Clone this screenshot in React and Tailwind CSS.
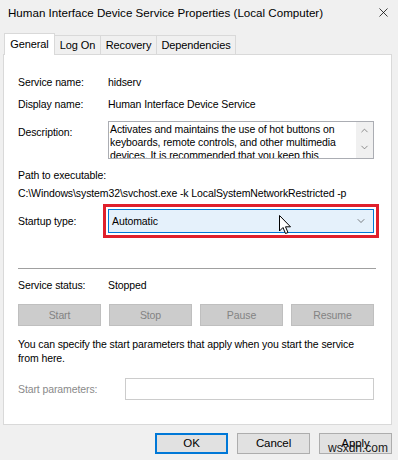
import { X, ChevronUp, ChevronDown } from 'lucide-react'

const font = { fontFamily: '"Liberation Sans", Arial, sans-serif' }

function Tab({ label, active, w }) {
  if (active) {
    return (
      <div className={`relative z-10 -mb-px flex h-[22px] items-start justify-center border border-b-0 border-[#d9d9d9] bg-white pt-[3px] ${w}`}>
        {label}
      </div>
    )
  }
  return (
    <div className={`-ml-px flex h-[19px] items-center justify-center border border-b-0 border-[#d9d9d9] bg-[#f0f0f0] ${w}`}>
      {label}
    </div>
  )
}

function Row({ label, children, className = '' }) {
  return (
    <div className={`flex items-center ${className}`}>
      <div className="w-[90px] shrink-0">{label}</div>
      {children}
    </div>
  )
}

function ServiceButton({ label }) {
  return (
    <div className="flex h-[22px] w-[83px] items-center justify-center border border-[#bfbfbf] bg-[#cccccc] text-[#838383]">
      {label}
    </div>
  )
}

function DialogButton({ label, primary }) {
  return (
    <div
      className={`flex h-[21px] w-[73px] items-center justify-center bg-[#e1e1e1] ${
        primary ? 'border-2 border-[#0078d7]' : 'border border-[#adadad]'
      }`}
    >
      {label}
    </div>
  )
}

export default function App() {
  return (
    <div className="relative h-[460px] w-[398px] overflow-hidden bg-[#f0f0f0] text-[10.5px] leading-[15px] tracking-[-0.1px] text-black" style={font}>
      {/* title bar */}
      <div className="flex h-[25px] items-center justify-between pl-[8px] pr-[7px] text-[11.6px] tracking-normal">
        <span>Human Interface Device Service Properties (Local Computer)</span>
        <X className="h-[15px] w-[15px]" strokeWidth={1.2} />
      </div>

      {/* tabs */}
      <div className="mt-[8px] flex items-end pl-[4px] text-[11px]">
        <Tab label="General" active w="w-[51px]" />
        <Tab label="Log On" w="w-[47px]" />
        <Tab label="Recovery" w="w-[57px]" />
        <Tab label="Dependencies" w="w-[80px]" />
      </div>

      {/* panel */}
      <div className="ml-[3px] h-[371px] w-[389px] border border-[#d9d9d9] bg-white pl-[14px] pt-[20px]">
        <Row label="Service name:">
          <span>hidserv</span>
        </Row>
        <Row label="Display name:" className="mt-[7px]">
          <span>Human Interface Device Service</span>
        </Row>

        <div className="mt-[9px] flex items-start">
          <div className="mt-[4px] w-[90px] shrink-0">Description:</div>
          <div className="flex h-[38px] w-[266px] overflow-hidden border border-[#abadb3]">
            <div className="flex-1 overflow-hidden pl-[1px] pt-[1px] leading-[13px]">
              Activates and maintains the use of hot buttons on keyboards, remote controls, and other multimedia devices. It is recommended that you keep this
            </div>
            <div className="flex w-[17px] flex-col items-center bg-[#f0f0f0] pt-[3px] text-[#606060]">
              <ChevronUp className="h-[11px] w-[11px]" strokeWidth={1.5} />
              <ChevronDown className="mt-[6px] h-[11px] w-[11px]" strokeWidth={1.5} />
            </div>
          </div>
        </div>

        <div className="mt-[9px]">Path to executable:</div>
        <div className="mt-[3px]">C:\Windows\system32\svchost.exe -k LocalSystemNetworkRestricted -p</div>

        <Row label="Startup type:" className="mt-[8px]">
          <div className="relative">
            <div className="flex h-[24px] w-[266px] items-center justify-between border border-[#0078d7] bg-[#e5f1fb] pl-[3px] pr-[6px]">
              <span>Automatic</span>
              <ChevronDown className="h-[12px] w-[12px] text-[#404040]" strokeWidth={1.3} />
            </div>
            <div className="absolute -inset-[5px] border-[3px] border-[#e0202c]" />
            <svg className="absolute left-[171px] top-[6px]" width="13" height="20" viewBox="0 0 13 20">
              <path d="M0.5 0.5 L0.5 16 L4 12.5 L6.5 18.5 L9 17.5 L6.5 11.8 L11.5 11.8 Z" fill="white" stroke="black" strokeWidth="1" />
            </svg>
          </div>
        </Row>

        <div className="mt-[35px] h-px w-[358px] bg-[#a0a0a0]" />

        <Row label="Service status:" className="mt-[9px]">
          <span>Stopped</span>
        </Row>

        <div className="mt-[11px] flex w-[356px] justify-between">
          <ServiceButton label="Start" />
          <ServiceButton label="Stop" />
          <ServiceButton label="Pause" />
          <ServiceButton label="Resume" />
        </div>

        <div className="mt-[11px] w-[348px] leading-[14px]">
          You can specify the start parameters that apply when you start the service from here.
        </div>

        <div className="mt-[13px] flex items-center">
          <div className="w-[107px] shrink-0 text-[#8a8a8a]">Start parameters:</div>
          <div className="h-[22px] w-[249px] border border-[#cccccc] bg-white" />
        </div>
      </div>

      {/* dialog buttons */}
      <div className="mt-[8px] flex justify-end gap-[9px] pr-[6px] text-[11.5px]">
        <DialogButton label="OK" primary />
        <DialogButton label="Cancel" />
        <DialogButton label="Apply" />
      </div>

      <div className="absolute bottom-[4px] right-[10px] text-[12px] tracking-normal text-[#202020]">wsxdn.com</div>
    </div>
  )
}
